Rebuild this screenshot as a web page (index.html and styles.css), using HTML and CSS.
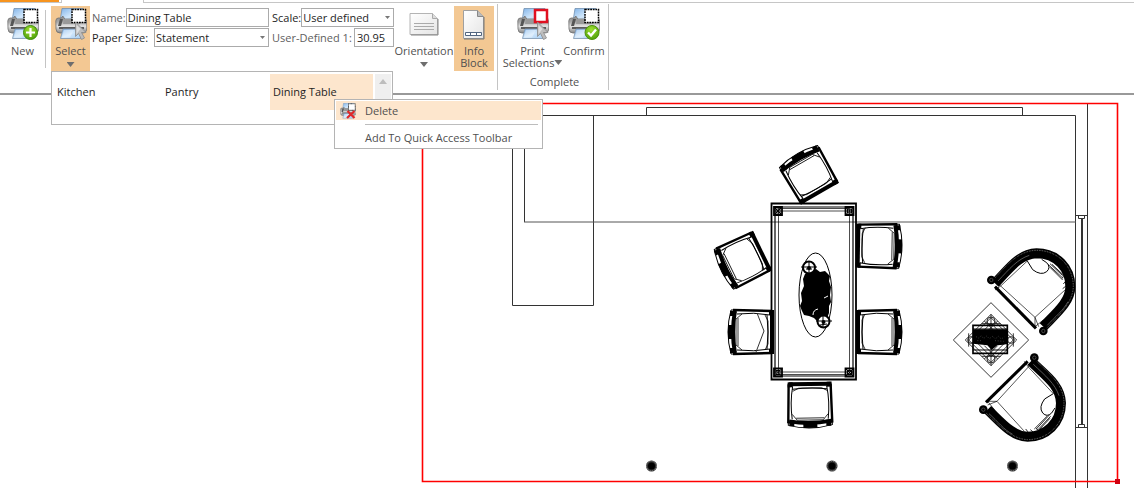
FILE: index.html
```html
<!DOCTYPE html>
<html lang="en">
<head>
<meta charset="utf-8">
<title>Print Layout</title>
<link rel="stylesheet" href="styles.css">
</head>
<body>
<svg class="defs" aria-hidden="true">
  <defs>
    <linearGradient id="paper" x1="0" y1="0" x2="1" y2="1"><stop offset="0" stop-color="#7fb2e8"/><stop offset=".5" stop-color="#cfe6fb"/><stop offset="1" stop-color="#a9cff3"/></linearGradient>
    <linearGradient id="metal" x1="0" y1="0" x2="0" y2="1"><stop offset="0" stop-color="#8c8c8c"/><stop offset=".35" stop-color="#a8a8a8"/><stop offset=".6" stop-color="#e4e4e4"/><stop offset="1" stop-color="#858585"/></linearGradient>
    <linearGradient id="sheet" x1="0" y1="0" x2="1" y2="1"><stop offset="0" stop-color="#fff"/><stop offset="1" stop-color="#e4e4e4"/></linearGradient>
    <radialGradient id="green" cx=".45" cy=".3" r=".7"><stop offset="0" stop-color="#a0e030"/><stop offset="1" stop-color="#4fa00a"/></radialGradient>
    <symbol id="printer" viewBox="0 0 32 32">
      <path d="M7 .5h21l-1 13H5z" fill="url(#paper)" stroke="#7290b0" stroke-width=".8"/>
      <path d="M.8 13q.2-3 2.500-3h3l1.500-2 2 3h18l1-2h1.500l1.500 5v6q0 5-4 5H5q-4 0-4-4z" fill="url(#metal)" stroke="#707070" stroke-width=".8"/>
      <path d="M5 11l3 0-2 7H3z" fill="#555"/>
      <path d="M9 11h17l-1 5H8z" fill="#999"/>
      <path d="M4 19h25v2H4z" fill="#5c5c5c"/>
      <path d="M8 21h17l1.500 9.500H5.500z" fill="url(#paper)" stroke="#7d95b0" stroke-width=".8"/>
      <path d="M9 22h10l-4 7.500H7z" fill="#fff" opacity=".35"/>
    </symbol>
    <symbol id="marquee" viewBox="0 0 32 32"><path d="M17 1.500h13.500v13H17z" fill="#fff" stroke="#000" stroke-width="1.500" stroke-dasharray="1.800 .8"/></symbol>
    <symbol id="pointer" viewBox="0 0 32 32"><path d="M20.500 14v14.500l3-3 3 6 3-1.500-3-5.500h4.500z" fill="#bdbdbd" stroke="#8c8c8c" stroke-width=".8"/><path d="M21.500 17v9l4-5z" fill="#dedede"/></symbol>
    <symbol id="cross" viewBox="0 0 32 32"><path d="M15 16l14 14M29 16L14 30" stroke="#e02828" stroke-width="4.500"/></symbol>
  </defs>
</svg>

<header class="ribbon">
  <div class="tabs"><span class="tab-file"></span><span class="tab-active"></span><span class="tab-rest"></span></div>
  <div class="groups">
    <div class="group group-new">
      <button class="tool tool-new" type="button">
        <svg class="icon" viewBox="0 0 32 32"><use href="#printer"/><use href="#marquee"/><circle cx="23.500" cy="24.500" r="7" fill="url(#green)" stroke="#3f900c"/><path d="M23.500 20v9M19 24.500h9" stroke="#fff" stroke-width="2.200"/></svg>
        <span>New</span>
      </button>
    </div>
    <div class="group group-setup">
      <button class="tool tool-select on" type="button" aria-expanded="true">
        <svg class="icon" viewBox="0 0 32 32"><use href="#printer"/><use href="#marquee"/><use href="#pointer"/></svg>
        <span>Select</span><i class="arrow"></i>
      </button>
      <div class="fields">
        <div class="field"><label class="soft" for="name">Name:</label><input id="name" class="box" value="Dining Table"></div>
        <div class="field"><label for="paper-size">Paper Size:</label><span class="pick pick-paper"><select id="paper-size" class="box"><option>Statement</option></select></span></div>
      </div>
      <div class="fields fields-scale">
        <div class="field"><label for="scale">Scale:</label><span class="pick pick-scale"><select id="scale" class="box"><option>User defined</option></select></span></div>
        <div class="field"><label class="soft" for="ud">User-Defined 1:</label><input id="ud" class="box box-number" value="30.95"></div>
      </div>
      <button class="tool tool-orient" type="button">
        <svg class="icon" viewBox="0 0 32 32"><path d="M2 5.500h22.500l5 5v16H2z" fill="url(#sheet)" stroke="#b4b4b4"/><path d="M24.500 5.500v5h5" fill="#ddd" stroke="#aaa"/><path d="M30 11v16H3" fill="none" stroke="#858585"/><path d="M6 15.500h20M6 18.500h20M6 21.500h20" stroke="#aaa"/></svg>
        <span>Orientation</span><i class="arrow"></i>
      </button>
      <button class="tool tool-info on" type="button" aria-pressed="true">
        <svg class="icon" viewBox="0 0 32 32"><path d="M5.500 2.500h14l6 6v22h-20z" fill="url(#sheet)" stroke="#a0a0a0"/><path d="M19.500 2.500v6h6" fill="#bbb" stroke="#888"/><path d="M26 9v22H6" fill="none" stroke="#777"/><path d="M7.500 24.500h16v3h-16z" fill="#fff" stroke="#526680"/><path d="M12.500 24v4M18.500 24v4" stroke="#526680"/></svg>
        <span>Info<br>Block</span>
      </button>
      <div class="gallery">
        <div class="gallery-items">
          <button class="item" type="button">Kitchen</button>
          <button class="item" type="button">Pantry</button>
          <button class="item current" type="button">Dining Table</button>
        </div>
        <div class="scroller"></div>
        <div class="menu" role="menu">
          <button class="menu-item hot" type="button" role="menuitem"><svg class="menu-icon" viewBox="0 0 32 32"><use href="#printer"/><use href="#marquee"/><use href="#cross"/></svg><span>Delete</span></button>
          <hr class="rule">
          <button class="menu-item" type="button" role="menuitem"><span class="menu-icon"></span><span>Add To Quick Access Toolbar</span></button>
        </div>
      </div>
    </div>
    <div class="group group-complete">
      <div class="tools">
        <button class="tool tool-print" type="button">
          <svg class="icon" viewBox="0 0 32 32"><use href="#printer"/><path d="M18 2h12v12H18z" fill="#fff" stroke="#e01020" stroke-width="2.500"/><use href="#pointer"/></svg>
          <span>Print<br>Selections<i class="arrow arrow-inline"></i></span>
        </button>
        <button class="tool tool-confirm" type="button">
          <svg class="icon" viewBox="0 0 32 32"><use href="#printer"/><use href="#marquee"/><circle cx="24" cy="24.500" r="7" fill="url(#green)" stroke="#4f930c"/><path d="M20 24.500l3 3 5-6" fill="none" stroke="#fff" stroke-width="2.400"/></svg>
          <span>Confirm</span>
        </button>
      </div>
      <div class="caption">Complete</div>
    </div>
  </div>
</header>

<main>
<svg class="plan" viewBox="0 96 1134 392" role="img" aria-label="Dining room floor plan">
  <defs>
    <g id="chair" fill="none" stroke="#000">
      <path d="M-22-21L17-22M-22 21L17 22" stroke-width="2.400"/>
      <path d="M-22-21V21" stroke-width="4"/>
      <path d="M-20-17Q-4-20 13-18M-20 17Q-4 20 13 18M-17-17Q-19 0-17 17"/>
      <path d="M-15-18L-18-12V11L-15 17M8-18L14-13V13L8 18M12-14V14" stroke-width=".8"/>
      <path d="M15-21Q19 0 15 21" stroke-width="4"/>
      <path d="M19-22Q25 0 19 22L16 22V-22Z"/>
      <path d="M20-7V7" stroke-width="4"/>
      <path d="M14-21h6v5h-6zM14 16h6v5h-6zM-24-22h5v5h-5zM-24 17h5v5h-5z" fill="#000" stroke="none"/>
    </g>
    <g id="armchair" fill="none" stroke="#000">
      <path d="M165 160C205 120 235 72 290 70C350 70 391 115 391 170C391 215 350 248 310 290" stroke-width="30"/>
      <path d="M159 150C199 107 235 61 290 61C355 61 400 110 400 170C398 220 355 258 317 298" stroke="#888" stroke-width="3" stroke-dasharray="2 3"/>
      <path d="M174 153C209 116 232 88 268 76M384 215C370 242 345 260 322 286" stroke="#555" stroke-width="3"/>
      <path d="M165 170L288 295" stroke-width="9"/>
      <path d="M170 160L182 168L285 262L296 290M182 168L262 93M285 262L375 180M285 262V290M165 180L182 168M310 270L285 290" stroke-width="2"/>
      <path d="M262 93L278 119Q303 138 320 125Q334 112 320 98L305 88" stroke-width="3"/>
      <path d="M325 104l43 40M330 101l38 36M330 112l38 38M336 103l34 32M375 130l-8 15M380 150l-10 12M378 168l-10 8" stroke-width="2.500"/>
      <circle cx="154" cy="150" r="13" fill="#000" stroke="none"/><circle cx="310" cy="303" r="13" fill="#000" stroke="none"/>
      <circle cx="154" cy="150" r="5" stroke="#666" stroke-width="2"/><circle cx="310" cy="303" r="5" stroke="#666" stroke-width="2"/>
    </g>
    <g id="post" fill="none" stroke="#000"><path d="M-4-4h8v8h-8z" stroke-width="1.800"/><path d="M-2-2h4v4h-4zM-4-4l8 8M4-4l-8 8"/></g>
    <g id="column"><circle r="5.500" fill="#333"/><circle r="5" fill="none" stroke="#999" stroke-dasharray="1 1"/><circle r="3.500"/></g>
  </defs>

  <g fill="none" stroke="#333">
    <path d="M422 115.500H1075.500V488M1087.500 103V488M646.500 115V107.500H1022.500V115M1075 215.500H1088M1075 427.500H1088"/>
    <path d="M512.500 115V305.500H593.500V115"/>
    <path d="M524.500 115V222"/>
    <path d="M524 222H1076" stroke="#555"/>
    <path d="M1078.500 215.500v3h6v-3M1078.500 427.500v-3h6v3"/>
    <path d="M1082 219V424" stroke-width="2"/>
  </g>

  <path d="M422.500 103.500H1117.500V481.500H422.500Z" fill="none" stroke="#ff0000" stroke-width="1.600"/>
  <path d="M1115 479h5v5h-5z" fill="#d00010"/>

  <use href="#chair" transform="translate(808 173) rotate(240)"/>
  <use href="#chair" transform="translate(741 261) rotate(154)"/>
  <use href="#chair" transform="translate(880 246) rotate(1)"/>
  <use href="#chair" transform="translate(880 332)"/>
  <use href="#chair" transform="translate(750 332) rotate(180)"/>
  <use href="#chair" transform="translate(810 406) rotate(89)"/>
  <path d="M757 313l7 18-8 21" fill="none" stroke="#333"/>

  <g fill="none" stroke="#000">
    <path d="M771.500 203.500H856V379.500H771.500Z" stroke-width="1.800"/>
    <path d="M775 207H853V376H775Z" stroke-width="1.200"/>
    <path d="M778.500 208.500H849.500V374.500H778.500ZM775 211H853M775 372H853" stroke-width=".7"/>
    <ellipse cx="815.500" cy="295" rx="16.500" ry="42"/>
  </g>
  <use href="#post" x="778" y="211"/><use href="#post" x="849.500" y="211"/><use href="#post" x="778" y="372.500"/><use href="#post" x="849.500" y="372.500"/>
  <path d="M805 274l4-2 1-3 4 1 2-1 4 3 5-1 2 2 3 3-1 5 2 6-1 8 1 7-2 4 0 7-2 5-6 0-4 3-3-3-5-2-5-1-2-4-2-5 2-5-1-8 3-7-1-7z"/>
  <path d="M813 315q0-5 5-6M824 298l4-2" stroke="#fff" fill="none"/>
  <g fill="#fff" stroke="#000" stroke-width="2"><circle cx="809" cy="267.500" r="6"/><circle cx="823.500" cy="321.500" r="6"/></g>
  <path d="M801 267h16M809 261v12M816 321h16M823 315v12M820 325l7-1M806 269h6" stroke="#000" fill="none"/>
  <circle cx="809" cy="268" r="2"/><circle cx="823.500" cy="322" r="2"/>

  <g transform="translate(940 230) scale(.3333)">
    <use href="#armchair"/>
    <use href="#armchair" transform="translate(433 229) rotate(90)"/>
    <g fill="none" stroke="#111" stroke-width="2.500">
      <path d="M153 218L266 330L153 442L40 330Z"/>
      <path d="M153 253L230 330L153 407L76 330ZM153 263L220 330L153 397L86 330ZM153 280L203 330L153 380L103 330ZM125 281L182 281M125 379H182M153 253V407M133 273l40 40M173 273l-40 40M133 387l40-40M173 387l-40-40M86 310v40M220 310v40"/>
      <circle cx="153" cy="273" r="12"/><circle cx="153" cy="387" r="12"/><circle cx="93" cy="330" r="10"/><circle cx="213" cy="330" r="10"/>
      <path d="M99 286H202V370H99Z" stroke="#000" stroke-width="5"/>
      <path d="M99 297H202M99 360H202" stroke="#000" stroke-width="3"/>
    </g>
    <path d="M99 298H202V342L190 344L172 346L155 360L142 346L99 341Z"/>
    <path d="M108 320l8 4 8-7 7 9 9-8 8 8 10-7 8 8 9-8 9 8 9-6M112 332h12M165 332l26 2" fill="none" stroke="#777" stroke-width="1.500" stroke-dasharray="3 5"/>
  </g>

  <use href="#column" x="651.500" y="466"/><use href="#column" x="832" y="466"/><use href="#column" x="1012.500" y="466"/>
</svg>
</main>
</body>
</html>
```
FILE: styles.css
```css
* { box-sizing: border-box; }
body { margin: 0; background: #fff; color: #1e1e1e; font: 11px/12px "Open Sans", "Noto Sans", sans-serif; }
button, input, select { font: inherit; color: inherit; margin: 0; }
button { border: 0; background: none; padding: 0; }
.defs { position: absolute; width: 0; height: 0; }

.ribbon { margin-bottom: 1px; border-bottom: 2px solid #999; }
.tabs { display: flex; height: 3px; }
.tab-file { width: 62px; border: solid #c6c6c6; border-width: 0 1px 1px 0; background: linear-gradient(#f7941e, #f7941e) 0 0 / 59px 2px no-repeat; }
.tab-active { width: 81px; }
.tab-rest { flex: 1; border: solid #c6c6c6; border-width: 0 0 1px 1px; }

.groups { display: flex; height: 90px; }
.group { display: flex; align-items: flex-start; }
.group-new { width: 46px; height: 58px; margin-top: 7px; border-right: 1px solid #c4c4c4; }
.group-new .tool { margin-top: -4px; }
.group-setup { position: relative; padding: 3px 3px 0 5px; }
.group-complete { flex-direction: column; height: 86px; margin-top: 1px; padding: 2px 3px 0 6px; border: solid #c4c4c4; border-width: 0 1px; color: #505050; }
.tools { display: flex; }

.tool { display: flex; flex-direction: column; align-items: center; height: 65px; padding-top: 2px; color: #505050; text-align: center; }
.tool.on { background: #f3c893; }
.icon { width: 32px; height: 32px; margin-bottom: 5px; flex: none; }
.tool-new { width: 46px; }
.tool-select { width: 39px; }
.tool-orient { width: 60px; }
.tool-info { width: 40px; }
.tool-print { width: 57px; white-space: nowrap; }
.tool-confirm { width: 46px; }
.group-complete .tools { margin-right: -2px; }
.arrow { width: 8px; height: 5px; margin-top: 5px; background: #6e6e6e; clip-path: polygon(0 0, 100% 0, 50% 100%); }
.arrow-inline { display: inline-block; margin: 0 0 2px; }
.caption { align-self: center; margin-top: 5px; }

.fields { display: flex; flex-direction: column; gap: 1px; width: 177px; margin: 2px 0 0 2px; }
.fields-scale { width: 122px; margin-left: 3px; }
.field { display: flex; align-items: center; justify-content: space-between; height: 19px; white-space: nowrap; }
.soft { color: #606060; }
.box { width: 100%; height: 19px; padding: 0 1px; border: 1px solid #ababab; border-radius: 0; background: #fff; outline: 0; appearance: none; }
#name { width: 145px; }
.box-number { width: 40px; padding-left: 2px; }
.pick { position: relative; }
.pick-paper { width: 115px; }
.pick-scale { width: 95px; }
.pick::after { content: ""; position: absolute; right: 4px; top: 8px; width: 5px; height: 3px; background: #777; clip-path: polygon(0 0, 100% 0, 50% 100%); pointer-events: none; }

.gallery { position: absolute; left: 5px; top: 68px; z-index: 2; display: flex; justify-content: space-between; width: 342px; height: 54px; padding: 2px 1px 1px 2px; border: 1px solid #b4b4b4; background: #fff; }
.gallery-items { display: flex; gap: 5px; }
.item { width: 103px; height: 36px; padding: 0 3px; text-align: left; }
.current { background: #fde6cd; }
.scroller { width: 16px; background: #efefef; }
.scroller::before { content: ""; display: block; width: 8px; height: 5px; margin: 5px auto 0; background: #bdbdbd; clip-path: polygon(50% 0, 100% 100%, 0 100%); }

.menu { position: absolute; left: 282px; top: 27px; width: 209px; padding: 1px; border: 1px solid #b4b4b4; background: #fff; color: #505050; white-space: nowrap; }
.menu-item { display: flex; align-items: center; gap: 9px; width: 100%; height: 19px; padding-left: 4px; }
.menu-item.hot { background: #fde6cd; }
.menu-icon { width: 16px; height: 16px; }
.rule { height: 1px; margin: 4px 3px 3px 29px; border: 0; background: #bdbdbd; }

.plan { display: block; width: 100%; height: auto; }
```
